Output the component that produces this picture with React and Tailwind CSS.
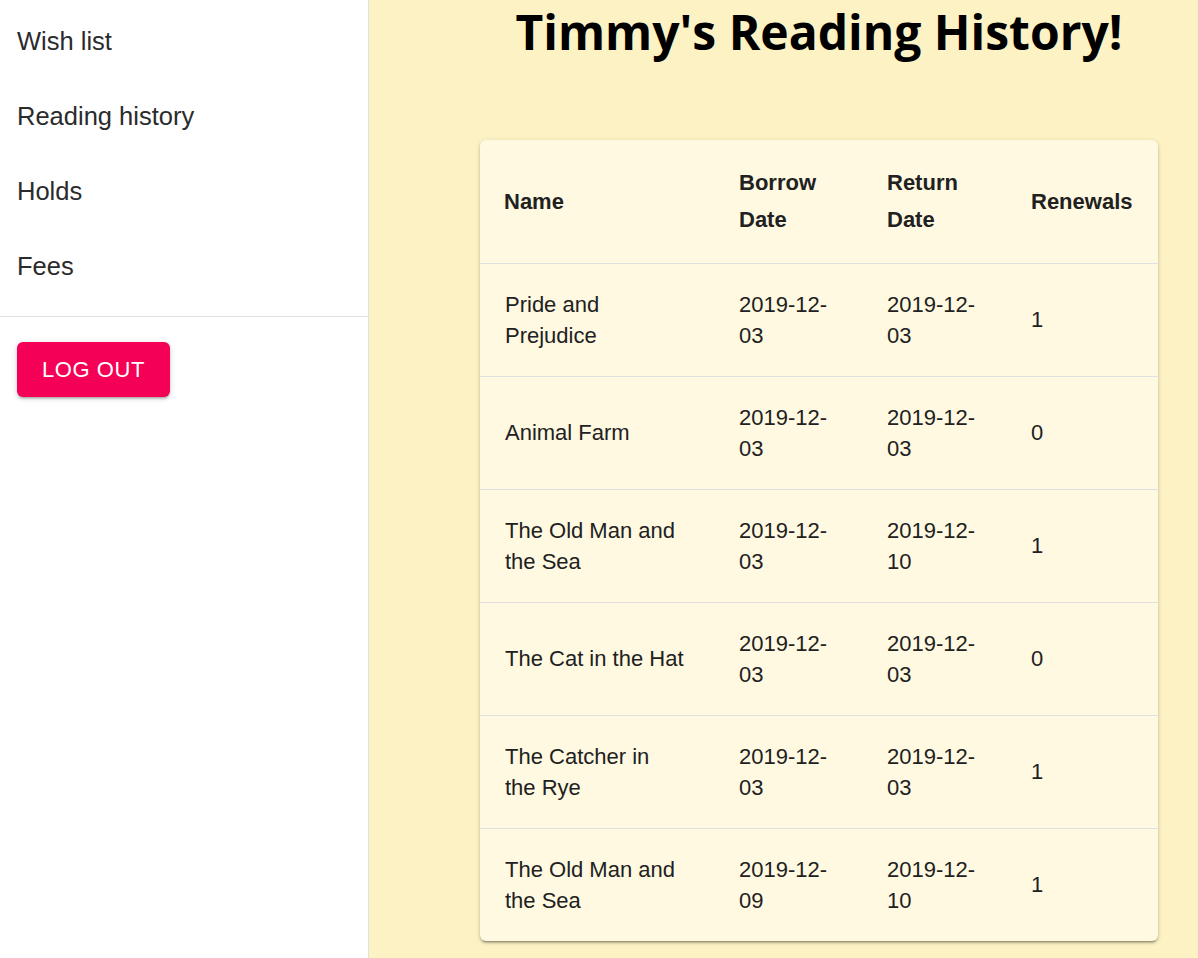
import React from "react";

const navItems = ["Wish list", "Reading history", "Holds", "Fees"];

// nbsp keeps "the Rye" together so the wrap matches
const rows = [
  { name: "Pride and Prejudice", borrow: "2019-12-03", ret: "2019-12-03", renewals: 1 },
  { name: "Animal Farm", borrow: "2019-12-03", ret: "2019-12-03", renewals: 0 },
  { name: "The Old Man and the Sea", borrow: "2019-12-03", ret: "2019-12-10", renewals: 1 },
  { name: "The Cat in the Hat", borrow: "2019-12-03", ret: "2019-12-03", renewals: 0 },
  { name: "The Catcher in the\u00a0Rye", borrow: "2019-12-03", ret: "2019-12-03", renewals: 1 },
  { name: "The Old Man and the Sea", borrow: "2019-12-09", ret: "2019-12-10", renewals: 1 },
];

const Sidebar = () => {
  return (
    <div className="w-[369px] shrink-0 bg-white border-r border-[#e0e0e0] min-h-screen">
      <ul className="pt-[4px] pb-[12px]">
        {navItems.map((item) => (
          <li
            key={item}
            className="h-[75px] flex items-center px-[17px] text-[25.5px] text-[#2b2b2b]"
          >
            {item}
          </li>
        ))}
      </ul>
      <div className="h-px bg-[#e0e0e0]" />
      <div className="px-[17px] pt-[25px]">
        <button className="w-[153px] h-[55px] rounded-[6px] bg-[#f50057] text-white text-[22px] tracking-[0.6px] shadow-[0_3px_2px_-2px_rgba(0,0,0,0.2),0_2px_3px_0_rgba(0,0,0,0.14),0_1px_7px_0_rgba(0,0,0,0.12)]">
          LOG OUT
        </button>
      </div>
    </div>
  );
};

const ReadingTable = () => {
  return (
    <div className="w-[678px] bg-[#fff9e1] rounded-[6px] overflow-hidden shadow-[0_3px_2px_-2px_rgba(0,0,0,0.3),0_2px_3px_0_rgba(0,0,0,0.16),0_1px_5px_0_rgba(0,0,0,0.12)]">
      <table className="w-full table-fixed border-collapse text-[#212121] text-[22px]">
        <colgroup>
          <col className="w-[235px]" />
          <col className="w-[148px]" />
          <col className="w-[144px]" />
          <col className="w-[151px]" />
        </colgroup>
        <thead>
          <tr className="h-[123px] border-b border-[#e0e0e0]">
            {["Name", "Borrow Date", "Return Date", "Renewals"].map((h) => (
              <th key={h} className="text-left font-bold leading-[37px] pl-[24px] pr-[12px] align-middle">
                {h}
              </th>
            ))}
          </tr>
        </thead>
        <tbody>
          {rows.map((r, i) => (
            <tr key={i} className={`h-[113px] ${i < rows.length - 1 ? "border-b border-[#e0e0e0]" : ""}`}>
              <td className="pl-[25px] pr-[25px] leading-[31px] align-middle">{r.name}</td>
              <td className="px-[24px] leading-[31px] align-middle">{r.borrow}</td>
              <td className="px-[24px] leading-[31px] align-middle">{r.ret}</td>
              <td className="px-[24px] leading-[31px] align-middle">{r.renewals}</td>
            </tr>
          ))}
        </tbody>
      </table>
    </div>
  );
};

export default function App() {
  return (
    <div className="flex min-h-screen font-['Liberation_Sans','Arial',sans-serif]">
      <Sidebar />
      <main className="flex-1 bg-[#fcf2c4] pl-[71px] flex flex-col items-center">
        <h1 className="font-['Open_Sans','Noto_Sans',sans-serif] font-bold text-[48px] leading-[64px] text-black">
          Timmy's Reading History!
        </h1>
        <div className="mt-[76px] mb-[16px]">
          <ReadingTable />
        </div>
      </main>
    </div>
  );
}
